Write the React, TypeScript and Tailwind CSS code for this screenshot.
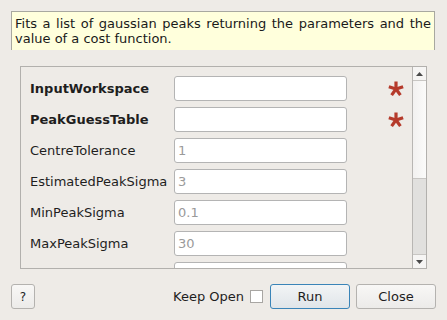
import React from "react";

const font = { fontFamily: '"DejaVu Sans", sans-serif' };

type Prop = { name: string; value?: string; required?: boolean };

const props: Prop[] = [
  { name: "InputWorkspace", required: true },
  { name: "PeakGuessTable", required: true },
  { name: "CentreTolerance", value: "1" },
  { name: "EstimatedPeakSigma", value: "3" },
  { name: "MinPeakSigma", value: "0.1" },
  { name: "MaxPeakSigma", value: "30" },
  { name: "" },
];

function Star() {
  const arms = [0, 72, 144, 216, 288];
  return (
    <svg width="18" height="18" viewBox="-9 -9 18 18">
      {arms.map(a => (
        <line key={a} x1="0" y1="0" x2="0" y2="-7.5" stroke="#b53a2b" strokeWidth="3.2"
          transform={`rotate(${a})`} />
      ))}
    </svg>
  );
}

function Row({ p }: { p: Prop }) {
  return (
    <div className="flex items-center h-[25px] shrink-0">
      <div className={`w-[144px] text-[13px] text-[#1e1e1e] ${p.required ? "font-bold" : ""}`}>{p.name}</div>
      <div className="w-[173px] h-[25px] rounded-[3px] border border-[#b4b4b4] bg-white flex items-center px-[3px] text-[13px] text-[#9a9a9a]">
        {p.value}
      </div>
      <div className="w-[62px] flex justify-end pr-[4px]">
        {p.required && <Star />}
      </div>
    </div>
  );
}

export default function App() {
  return (
    <div className="w-[447px] h-[320px] bg-[#eeebe7] overflow-hidden flex flex-col" style={font}>
      <div className="mt-[11px] ml-[11px] w-[424px] h-[39px] bg-[#ffffdc] border-l border-t border-r border-[#a8a8a0] px-[3px] pt-[4px] text-[13px] leading-[15px] text-[#1a1a1a] text-justify">
        Fits a list of gaussian peaks returning the parameters and the value of a cost function.
      </div>

      <div className="mt-[16px] ml-[20px] w-[407px] h-[203px] border border-[#b2b0ad] flex overflow-hidden">
        <div className="flex-1 flex flex-col gap-[6px] pt-[9px] pl-[9px]">
          {props.map((p, i) => <Row key={i} p={p} />)}
        </div>
        <div className="w-[14px] border-l border-[#b8b6b3] flex flex-col">
          <div className="h-[14px] bg-[#f6f5f4] border-b border-[#c8c6c3] flex items-center justify-center">
            <svg width="7" height="4" viewBox="0 0 7 4"><path d="M3.5 0L7 4H0Z" fill="#4a4a4a" /></svg>
          </div>
          <div className="h-[98px] bg-gradient-to-r from-[#f2f1f0] to-[#fbfbfa] border-b border-[#c8c6c3]" />
          <div className="flex-1 bg-[#e1e0de]" />
          <div className="h-[14px] bg-[#f6f5f4] border-t border-[#c8c6c3] flex items-center justify-center">
            <svg width="7" height="4" viewBox="0 0 7 4"><path d="M0 0H7L3.5 4Z" fill="#4a4a4a" /></svg>
          </div>
        </div>
      </div>

      <div className="mt-[15px] flex items-center h-[25px] pl-[11px] pr-[11px]">
        <button className="w-[24px] h-[25px] rounded-[3px] border border-[#b4b2af] bg-gradient-to-b from-[#f8f7f6] to-[#ecebe9] text-[12px] text-[#1e1e1e]">?</button>
        <div className="flex-1" />
        <span className="text-[13px] text-[#1e1e1e]">Keep Open</span>
        <div className="ml-[6px] w-[13px] h-[13px] border border-[#a8a6a3] bg-white" />
        <button className="ml-[7px] w-[80px] h-[25px] rounded-[3px] border border-[#3a84b8] bg-gradient-to-b from-[#f2f4f6] to-[#e0e5e9] text-[13px] text-[#1e1e1e]">Run</button>
        <button className="ml-[6px] w-[80px] h-[25px] rounded-[3px] border border-[#b4b2af] bg-gradient-to-b from-[#f8f7f6] to-[#ecebe9] text-[13px] text-[#1e1e1e]">Close</button>
      </div>
    </div>
  );
}
